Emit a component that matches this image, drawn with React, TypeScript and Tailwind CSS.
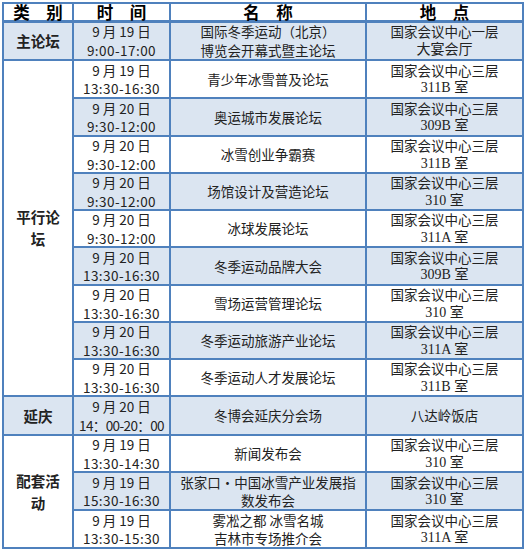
import React from "react";

type Row = {
  cat?: { text: React.ReactNode; span: number; shaded: boolean };
  date: string;
  time: string;
  name: React.ReactNode;
  loc1: string;
  loc2?: string;
  shaded: boolean;
  h: number;
  wide?: boolean;
};

const rows: Row[] = [
  { cat: { text: "主论坛", span: 1, shaded: true }, date: "9 月 19 日", time: "9:00-17:00", name: <>国际冬季运动（北京）<br />博览会开幕式暨主论坛</>, loc1: "国家会议中心一层", loc2: "大宴会厅", shaded: true, h: 39 },
  { cat: { text: <>平行论<br />坛</>, span: 9, shaded: false }, date: "9 月 19 日", time: "13:30-16:30", name: "青少年冰雪普及论坛", loc1: "国家会议中心三层", loc2: "311B 室", shaded: false, h: 38 },
  { date: "9 月 20 日", time: "9:30-12:00", name: "奥运城市发展论坛", loc1: "国家会议中心三层", loc2: "309B 室", shaded: true, h: 38 },
  { date: "9 月 20 日", time: "9:30-12:00", name: "冰雪创业争霸赛", loc1: "国家会议中心三层", loc2: "311B 室", shaded: false, h: 37 },
  { date: "9 月 20 日", time: "9:30-12:00", name: "场馆设计及营造论坛", loc1: "国家会议中心三层", loc2: "310 室", shaded: true, h: 37 },
  { date: "9 月 20 日", time: "9:30-12:00", name: "冰球发展论坛", loc1: "国家会议中心三层", loc2: "311A 室", shaded: false, h: 37 },
  { date: "9 月 20 日", time: "13:30-16:30", name: "冬季运动品牌大会", loc1: "国家会议中心三层", loc2: "309B 室", shaded: true, h: 38 },
  { date: "9 月 20 日", time: "13:30-16:30", name: "雪场运营管理论坛", loc1: "国家会议中心三层", loc2: "310 室", shaded: false, h: 37 },
  { date: "9 月 20 日", time: "13:30-16:30", name: "冬季运动旅游产业论坛", loc1: "国家会议中心三层", loc2: "311A 室", shaded: true, h: 37 },
  { date: "9 月 20 日", time: "13:30-16:30", name: "冬季运动人才发展论坛", loc1: "国家会议中心三层", loc2: "311B 室", shaded: false, h: 37 },
  { cat: { text: "延庆", span: 1, shaded: true }, date: "9 月 20 日", time: "14：00-20：00", name: "冬博会延庆分会场", loc1: "八达岭饭店", shaded: true, h: 39, wide: true },
  { cat: { text: <>配套活<br />动</>, span: 3, shaded: false }, date: "9 月 19 日", time: "13:30-14:30", name: "新闻发布会", loc1: "国家会议中心三层", loc2: "310 室", shaded: false, h: 37 },
  { date: "9 月 19 日", time: "15:30-16:30", name: <>张家口·中国冰雪产业发展指<br />数发布会</>, loc1: "国家会议中心三层", loc2: "310 室", shaded: true, h: 38 },
  { date: "9 月 19 日", time: "13:30-15:30", name: <>雾凇之都 冰雪名城<br />吉林市专场推介会</>, loc1: "国家会议中心三层", loc2: "311A 室", shaded: false, h: 38 },
];

const cjk = "font-['Noto_Sans_CJK_SC',sans-serif]";
const cell = "border-2 border-[#4f81bd] text-center align-middle p-0";
const box = "h-[32px] flex flex-col justify-center items-center";
const line = "leading-[18.5px] whitespace-nowrap";

export default function App() {
  return (
    <div className="bg-white w-[527px] h-[554px] p-[2px] overflow-hidden">
      <table className={`table-fixed border-collapse w-[522px] text-[#222] ${cjk}`}>
        <colgroup>
          <col className="w-[70px]" />
          <col className="w-[97px]" />
          <col className="w-[196px]" />
          <col className="w-[157px]" />
        </colgroup>
        <thead>
          <tr style={{ height: 18 }}>
            {["类　别", "时　间", "名　称", "地　点"].map((t) => (
              <th key={t} className={`${cell} border-b-[3px] text-[16.5px] font-bold text-black`}>
                <div className="h-[15px] flex items-center justify-center leading-[17px] whitespace-nowrap pt-[1px]">{t}</div>
              </th>
            ))}
          </tr>
        </thead>
        <tbody>
          {rows.map((r, i) => {
            const bg = r.shaded ? "bg-[#dbe5f1]" : "bg-white";
            return (
              <tr key={i} style={{ height: r.h }}>
                {r.cat && (
                  <td
                    rowSpan={r.cat.span}
                    className={`${cell} ${r.cat.shaded ? "bg-[#dbe5f1]" : "bg-white"} text-[14.5px] leading-[22px] font-semibold`}
                  >
                    <div className="h-[30px] flex items-center justify-center">
                      <div>{r.cat.text}</div>
                    </div>
                  </td>
                )}
                <td className={`${cell} ${bg} text-[13.5px]`}>
                  <div className={box}>
                    <div className={line}>{r.date}</div>
                    <div className={r.wide ? `${line} tracking-[-0.6px]` : `${line} tracking-[0.45px]`}>{r.time}</div>
                  </div>
                </td>
                <td className={`${cell} ${bg} text-[13.5px]`}>
                  <div className={box}>
                    <div className={line}>{r.name}</div>
                  </div>
                </td>
                <td className={`${cell} ${bg} text-[13.5px]`}>
                  <div className={box}>
                    <div className={line}>{r.loc1}</div>
                    {r.loc2 && (
                      <div className={`${line} font-['Liberation_Serif','Noto_Sans_CJK_SC',serif] text-[14px]`}>{r.loc2}</div>
                    )}
                  </div>
                </td>
              </tr>
            );
          })}
        </tbody>
      </table>
    </div>
  );
}
